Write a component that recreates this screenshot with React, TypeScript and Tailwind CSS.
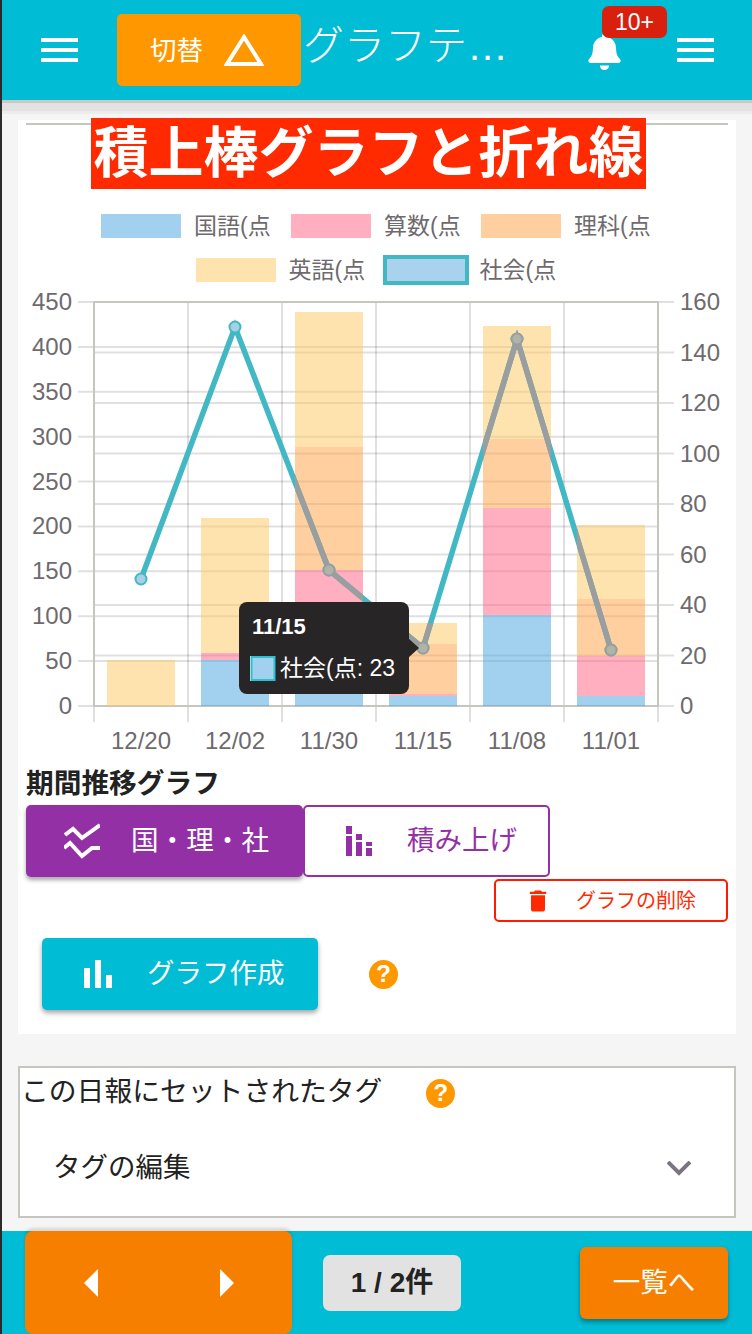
import React from 'react';
import { FaBell } from 'react-icons/fa';
import { MdDelete } from 'react-icons/md';

const BLUE = 'rgba(67,163,223,0.5)';
const PINK = 'rgba(255,95,129,0.5)';
const ORANGE = 'rgba(255,159,65,0.5)';
const YELLOW = 'rgba(255,199,93,0.5)';
const TEAL = '#41b8c4';
const GREY = '#9a9e9e';

const GRID = 'rgba(0,0,0,0.12)';
const FRAME = '#c6c6c0';

// tops of the stacked segments, in picture pixels (blue, pink, orange, yellow)
const BARS = [
  { label: '12/20', x: 107, tops: [706, 706, 706, 660] },
  { label: '12/02', x: 201, tops: [660, 653, 653, 518] },
  { label: '11/30', x: 295, tops: [660, 570, 447, 312] },
  { label: '11/15', x: 389, tops: [696, 694, 644, 623] },
  { label: '11/08', x: 483, tops: [615, 508, 439, 326] },
  { label: '11/01', x: 577, tops: [696, 656, 599, 525] },
];
const FILLS = [BLUE, PINK, ORANGE, YELLOW];

const POINTS = [
  [141, 579],
  [235, 327],
  [329, 570],
  [423, 648],
  [517, 339],
  [611, 650],
];
const LINE = POINTS.map((p) => p.join(',')).join(' ');

const LEFT_TICKS = [0, 50, 100, 150, 200, 250, 300, 350, 400, 450];
const RIGHT_TICKS = [0, 20, 40, 60, 80, 100, 120, 140, 160];
const leftY = (v: number) => 706 - (v * 404) / 450;
const rightY = (v: number) => 706 - (v * 404) / 160;

const Chart = () => (
  <svg width={718} height={470} viewBox="18 290 718 470" className="block">
    <defs>
      <clipPath id="bar-area">
        {BARS.map((b) => (
          <rect key={b.label} x={b.x} y={b.tops[3]} width={68} height={706 - b.tops[3]} />
        ))}
      </clipPath>
    </defs>

    {LEFT_TICKS.map((v) => (
      <line key={v} x1={78} x2={658} y1={leftY(v)} y2={leftY(v)} stroke={GRID} strokeWidth={2} />
    ))}
    {RIGHT_TICKS.map((v) => (
      <line key={v} x1={94} x2={674} y1={rightY(v)} y2={rightY(v)} stroke={GRID} strokeWidth={2} />
    ))}
    {[94, 188, 282, 376, 470, 564, 658].map((x) => (
      <line key={x} x1={x} x2={x} y1={302} y2={722} stroke={GRID} strokeWidth={2} />
    ))}
    <rect x={94} y={302} width={564} height={404} fill="none" stroke={FRAME} strokeWidth={2} />

    {BARS.map((b) =>
      b.tops.map((top, i) => {
        const bottom = i === 0 ? 706 : b.tops[i - 1];
        return <rect key={i} x={b.x} y={top} width={68} height={bottom - top} fill={FILLS[i]} />;
      }),
    )}

    <polyline points={LINE} fill="none" stroke={TEAL} strokeWidth={5.5} />
    {POINTS.map(([x, y]) => (
      <circle key={x} cx={x} cy={y} r={5.5} fill="#a8d0e4" stroke={TEAL} strokeWidth={2} />
    ))}
    <g clipPath="url(#bar-area)">
      <polyline points={LINE} fill="none" stroke={GREY} strokeWidth={5.5} />
      {POINTS.map(([x, y]) => (
        <circle key={x} cx={x} cy={y} r={5.5} fill="#b0b4a8" stroke={GREY} strokeWidth={2} />
      ))}
    </g>

    <g fontSize={24} fill="#6e6a6e">
      {LEFT_TICKS.map((v) => (
        <text key={v} x={72} y={leftY(v) + 8} textAnchor="end">
          {v}
        </text>
      ))}
      {RIGHT_TICKS.map((v) => (
        <text key={v} x={680} y={rightY(v) + 8}>
          {v}
        </text>
      ))}
      {BARS.map((b) => (
        <text key={b.label} x={b.x + 34} y={749} textAnchor="middle">
          {b.label}
        </text>
      ))}
    </g>

    {/* tooltip */}
    <polygon points="408,638 419,648 408,658" fill="#282526" />
    <rect x={239} y={602} width={170} height={92} rx={8} fill="#282526" />
    <text x={252} y={634} fontSize={22} fontWeight={700} fill="#fff">
      11/15
    </text>
    <rect x={250} y={656} width={25} height={25} fill="#fff" />
    <rect x={251.5} y={657} width={23} height={23} fill="#a1d1ef" stroke="#2cc0d0" strokeWidth={2} />
    <text x={280} y={676} fontSize={23} fill="#fff">
      社会(点: 23
    </text>
  </svg>
);

const Hamburger = () => (
  <div className="flex h-[24px] w-[37px] shrink-0 flex-col justify-between">
    <div className="h-[4px] bg-white" />
    <div className="h-[4px] bg-white" />
    <div className="h-[4px] bg-white" />
  </div>
);

const Help = () => (
  <div className="flex h-[29px] w-[29px] shrink-0 items-center justify-center rounded-full bg-[#ff9800] text-[24px] font-bold leading-none text-white">
    ?
  </div>
);

const LegendItem = ({ color, label }: { color: string; label: string }) => (
  <div className="flex h-[24px] items-center gap-[13px]">
    <div className="h-[24px] w-[80px]" style={{ background: color }} />
    <span className="w-[76px] whitespace-nowrap text-[23px] leading-none text-[#6e6a6e]">{label}</span>
  </div>
);

export default function App() {
  return (
    <div className="flex h-[1334px] w-[752px] overflow-hidden font-['Liberation_Sans','Noto_Sans_CJK_JP',sans-serif]">
      <div className="w-[2px] shrink-0 bg-[#2b2b2b]" />
      <div className="flex min-w-0 flex-1 flex-col bg-[#f5f5f5]">
        {/* header */}
        <header className="relative z-10 flex h-[100px] shrink-0 items-center bg-[#00bcd4] pl-[39px] shadow-[0_3px_0_#c9c9c5,0_11px_0_#e2e2e2,0_14px_0_#ececec]">
          <Hamburger />
          <button className="ml-[39px] flex h-[72px] w-[184px] shrink-0 items-center rounded-[5px] bg-[#ff9800] pl-[33px] text-[26.5px] text-white">
            <span className="mt-[4px]">切替</span>
            <svg width={40} height={32} viewBox="0 0 40 32" className="ml-[21px]">
              <polygon points="20,3 37,30 3,30" fill="none" stroke="#fff" strokeWidth={4} />
            </svg>
          </button>
          <div className="ml-[2px] w-[208px] truncate pb-[8px] text-[41px] font-light leading-[56px] text-white">
            グラフテストの日報
          </div>
          <div className="relative ml-[75px] mt-[3px] shrink-0 text-white">
            <FaBell size={37} />
            <div className="absolute left-[16px] top-[-27px] flex h-[32px] w-[65px] items-center justify-center rounded-[7px] bg-[#d9200f] text-[23px] font-light leading-none text-white">
              10+
            </div>
          </div>
          <div className="ml-[54px]">
            <Hamburger />
          </div>
        </header>

        {/* graph card */}
        <main className="flex-1">
          <section className="ml-[16px] mt-[20px] w-[718px] bg-white pb-[24px]">
            <div className="mx-[8px] h-[2px] translate-y-[3px] bg-[#c6c6c0]" />
            <h1 className="relative ml-[73px] mt-[-4px] h-[71px] w-[555px] bg-[#ff2a00] text-center text-[55px] font-bold leading-[71px] text-white whitespace-nowrap">
              積上棒グラフと折れ線
            </h1>

            <div className="mt-[25px] flex flex-col items-center gap-[20px] pr-[3px]">
              <div className="flex gap-[21px]">
                <LegendItem color="#a1d1ef" label="国語(点" />
                <LegendItem color="#ffafc0" label="算数(点" />
                <LegendItem color="#ffcfa0" label="理科(点" />
              </div>
              <div className="flex gap-[18px]">
                <LegendItem color="#ffe3ae" label="英語(点" />
                <div className="flex h-[24px] items-center gap-[11px]">
                  <div className="h-[30px] w-[86px] border-[4px] border-[#41b8c4] bg-[#a8d2ee]" />
                  <span className="w-[76px] whitespace-nowrap text-[23px] leading-none text-[#6e6a6e]">社会(点</span>
                </div>
              </div>
            </div>

            <div className="mt-[8px]">
              <Chart />
            </div>

            <h2 className="ml-[8px] mt-[6px] text-[27.7px] font-bold leading-[36px] text-[#222]">期間推移グラフ</h2>

            <div className="ml-[8px] mt-[3px] flex">
              <button className="flex h-[72px] w-[277px] items-center rounded-[5px] bg-[#9330a5] pl-[38px] text-[27.6px] text-white shadow-[0_3px_4px_rgba(0,0,0,0.35)]">
                <svg width={36} height={36} viewBox="0 0 36 36" fill="none" stroke="#fff" strokeWidth={4}>
                  <polyline points="1,12 9,6 18,15 36,2" />
                  <polyline points="0,25 6,20 18,33 28,25 36,25" />
                </svg>
                <span className="ml-[31px]">国・理・社</span>
              </button>
              <button className="flex h-[72px] w-[247px] items-center rounded-[5px] border-2 border-[#9330a5] bg-white pl-[41px] text-[27.5px] text-[#9330a5]">
                <svg width={26} height={30} viewBox="0 0 26 30" fill="#9330a5">
                  <rect x={0} y={0} width={6} height={8} />
                  <rect x={0} y={10} width={6} height={20} />
                  <rect x={10} y={8} width={6} height={6} />
                  <rect x={10} y={16} width={6} height={14} />
                  <rect x={20} y={16} width={6} height={4} />
                  <rect x={20} y={22} width={6} height={8} />
                </svg>
                <span className="ml-[35px]">積み上げ</span>
              </button>
            </div>

            <div className="mt-[2px] flex justify-end pr-[8px]">
              <button className="flex h-[43px] w-[234px] items-center rounded-[5px] border-2 border-[#ff1a00] bg-white pl-[28px] text-[20px] text-[#ff2a00]">
                <MdDelete size={28} className="shrink-0" />
                <span className="ml-[24px]">グラフの削除</span>
              </button>
            </div>

            <div className="ml-[24px] mt-[16px] flex items-center">
              <button className="flex h-[72px] w-[276px] items-center rounded-[5px] bg-[#00bcd4] pl-[42px] text-[27.5px] text-white shadow-[0_3px_5px_rgba(0,0,0,0.35)]">
                <svg width={28} height={28} viewBox="0 0 28 28" fill="#fff">
                  <rect x={0} y={8} width={6} height={20} />
                  <rect x={11} y={0} width={6} height={28} />
                  <rect x={22} y={15} width={6} height={13} />
                </svg>
                <span className="ml-[35px]">グラフ作成</span>
              </button>
              <div className="ml-[51px]">
                <Help />
              </div>
            </div>
          </section>

          {/* tags */}
          <section className="ml-[16px] mt-[32px] h-[152px] w-[718px] border-2 border-[#c6c6c0] bg-white">
            <div className="flex items-center pl-[1px] pt-[4px]">
              <span className="text-[27.8px] leading-[40px] text-[#222]">この日報にセットされたタグ</span>
              <div className="ml-[44px] mt-[2px]">
                <Help />
              </div>
            </div>
            <div className="mt-[26px] flex h-[60px] items-center justify-between pl-[33px] pr-[43px] text-[27.5px] text-[#222]">
              <span>タグの編集</span>
              <svg width={24} height={15} viewBox="0 0 24 15" fill="none" stroke="#7b7580" strokeWidth={4}>
                <polyline points="1,1 12,12 23,1" />
              </svg>
            </div>
          </section>
        </main>

        {/* footer */}
        <footer className="flex h-[103px] shrink-0 items-center bg-[#00bcd4] pl-[23px] pr-[24px]">
          <div className="flex h-[103px] w-[267px] items-center justify-between rounded-[8px] bg-[#f77f00] pl-[59px] pr-[58px] shadow-[0_-3px_3px_rgba(0,0,0,0.12)]">
            <svg width={14} height={28} viewBox="0 0 14 28" fill="#fff">
              <polygon points="14,0 0,14 14,28" />
            </svg>
            <svg width={14} height={28} viewBox="0 0 14 28" fill="#fff">
              <polygon points="0,0 14,14 0,28" />
            </svg>
          </div>
          <div className="ml-[31px] flex h-[56px] w-[138px] items-center justify-center rounded-[7px] bg-[#e2e2e2] text-[28px] font-bold text-[#222]">
            1 / 2件
          </div>
          <button className="ml-auto h-[72px] w-[148px] rounded-[6px] bg-[#f77f00] text-[27.5px] text-white shadow-[0_3px_4px_rgba(0,0,0,0.35)]">
            一覧へ
          </button>
        </footer>
      </div>
    </div>
  );
}
